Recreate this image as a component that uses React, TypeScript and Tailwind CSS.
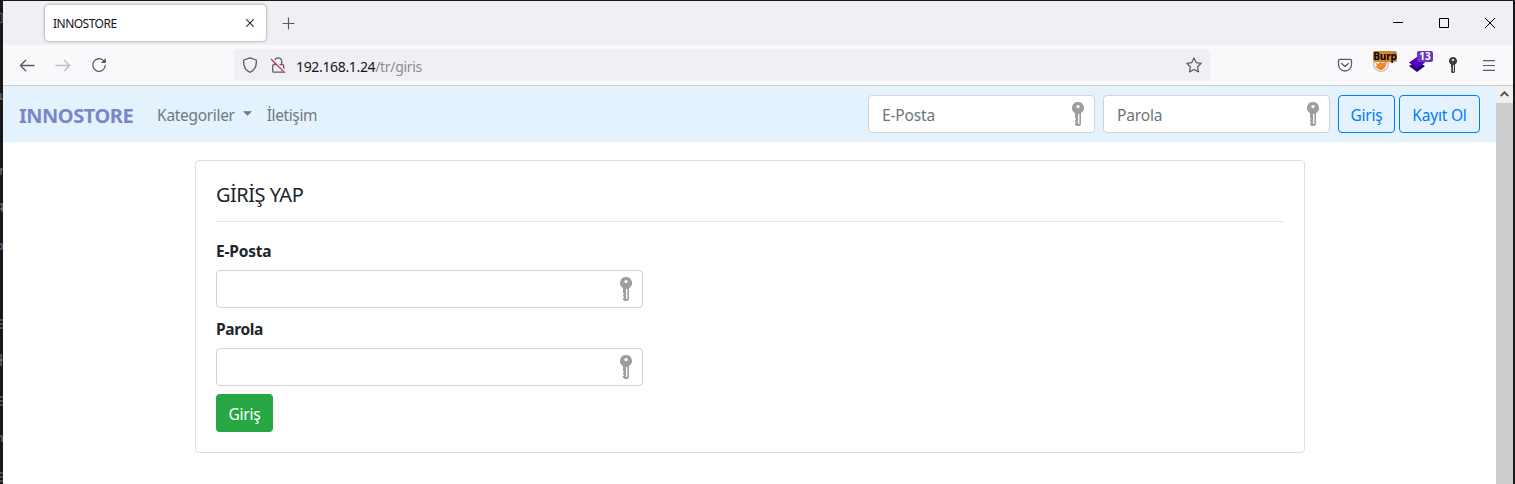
import React from 'react';

function KeyIcon({ className }: { className: string }) {
  return (
    <svg viewBox="0 0 12 24" className={className} fill="currentColor">
      <path
        fillRule="evenodd"
        d="M6 0a6 6 0 0 1 3 11.2V22.500L7.500 24h-3L3 22.500v-1.500h1v-1.300H3v-2.200h1v-1.300H3v-5A6 6 0 0 1 6 0zm0 2.900a1.700 1.700 0 1 0 0 3.400A1.700 1.700 0 0 0 6 2.900zm.1 9.100v10h1.300V12z"
      />
    </svg>
  );
}

function Field({ placeholder, width }: { placeholder?: string; width: string }) {
  return (
    <div className={`${width} flex h-[38px] shrink-0 items-center justify-between rounded border border-[#ced4da] bg-white pl-[13px] pr-[10px]`}>
      <span className="mt-[2px] text-[15.500px] leading-6 tracking-[-0.15px] text-[#6c757d]">{placeholder}</span>
      <KeyIcon className="h-6 w-3 shrink-0 text-[#9e9e9e]" />
    </div>
  );
}

function TabStrip() {
  return (
    <div className="flex h-11 items-start bg-[#f0eff4]">
      <div className="ml-[42px] mt-1 flex h-9 w-[221px] items-center justify-between rounded bg-white pl-2 pr-3 shadow-[0_0_3px_rgba(0,0,0,0.45)]">
        <span className="mt-px text-[12px] tracking-[-0.52px] text-[#15141a]">INNOSTORE</span>
        <svg viewBox="0 0 8 8" className="h-2 w-2" stroke="#2b2a33" strokeWidth="1.100">
          <path d="M.3.3l7.400 7.400M7.700.3L.3 7.700" />
        </svg>
      </div>
      <svg viewBox="0 0 13 13" className="ml-4 mt-4 h-[13px] w-[13px]" stroke="#5b5b66" strokeWidth="1.200">
        <path d="M6.500 .5v12M.5 6.500h12" />
      </svg>
      <div className="ml-auto mr-[18px] mt-[17px] flex gap-9">
        <svg viewBox="0 0 10 10" className="h-[10px] w-[10px]" stroke="#000">
          <path d="M0 4.500h10" />
        </svg>
        <svg viewBox="0 0 10 10" className="h-[10px] w-[10px]" stroke="#000" fill="none">
          <path d="M.5.5h9v9h-9z" />
        </svg>
        <svg viewBox="0 0 10 10" className="h-[10px] w-[10px]" stroke="#000">
          <path d="M0 0l10 10M10 0L0 10" />
        </svg>
      </div>
    </div>
  );
}

function Toolbar() {
  return (
    <div className="flex h-10 items-center bg-[#f9f9fb]">
      <svg viewBox="0 0 16 16" className="ml-4 h-4 w-4" fill="none" stroke="#5b5b66" strokeWidth="1.300" strokeLinecap="round" strokeLinejoin="round">
        <path d="M15 8.500H1.500M6.700 3.200L1.400 8.500l5.300 5.300" />
      </svg>
      <svg viewBox="0 0 16 16" className="ml-5 h-4 w-4" fill="none" stroke="#bdbdc3" strokeWidth="1.300" strokeLinecap="round" strokeLinejoin="round">
        <path d="M1 8.500h13.500M9.300 3.200l5.300 5.300-5.300 5.300" />
      </svg>
      <svg viewBox="0 0 16 16" className="ml-5 h-4 w-4" fill="none" stroke="#5b5b66" strokeWidth="1.300" strokeLinecap="round">
        <path d="M14.300 8.500A6.300 6.300 0 1 1 12.500 3.600" />
        <path d="M14.900 1v5h-5z" fill="#5b5b66" stroke="none" />
      </svg>
      <div className="ml-[127px] flex h-8 w-[976px] items-center rounded bg-[#f0f0f4] pl-2 pr-2">
        <svg viewBox="0 0 16 16" className="h-4 w-4" fill="none" stroke="#5b5b66" strokeWidth="1.300" strokeLinejoin="round">
          <path d="M8 .8l6.300 2.200c.5 5.900-1.500 10.200-6.300 12.300C3.200 13.200 1.200 8.900 1.700 3z" />
        </svg>
        <svg viewBox="0 0 16 16" className="ml-3 h-4 w-4" fill="none">
          <g stroke="#5b5b66" strokeWidth="1.300">
            <rect x="2.700" y="7.600" width="11" height="7.600" rx="1.200" />
            <path d="M4.700 7.500V4.300a3.500 3.500 0 0 1 7 0v3.200" />
          </g>
          <path d="M2 1.700l13.500 13.600" stroke="#f0f0f4" strokeWidth="2.500" />
          <path d="M1 2l14 14" stroke="#e22850" strokeWidth="1.200" />
        </svg>
        <span className="ml-[10px] mt-[2px] text-[14px] tracking-[-0.34px] text-[#15141a]">
          192.168.1.24<span className="text-[#8b8b93]">/tr/giris</span>
        </span>
        <svg viewBox="0 0 16 16" className="ml-auto h-4 w-4" fill="none" stroke="#5b5b66" strokeWidth="1.200" strokeLinejoin="round">
          <path d="M8 1l2.200 4.600 5.100.7-3.700 3.500.9 5.100L8 12.500l-4.500 2.400.9-5.100L.7 6.300l5.100-.7z" />
        </svg>
      </div>
      <svg viewBox="0 0 16 16" className="ml-[127px] h-4 w-4" fill="none" stroke="#5b5b66" strokeWidth="1.300" strokeLinecap="round" strokeLinejoin="round">
        <path d="M3 2.300h10a1.500 1.500 0 0 1 1.500 1.500V7.500a6.500 6.500 0 0 1-13 0V3.800A1.500 1.500 0 0 1 3 2.300z" />
        <path d="M4.600 6.500L8 9.600l3.400-3.100" />
      </svg>
      <div className="relative ml-[19px] h-6 w-[26px]">
        <svg viewBox="0 0 16 16" className="absolute left-px top-[3px] h-4 w-4">
          <circle cx="8" cy="8" r="7.300" fill="#fff" stroke="#bcb3aa" strokeWidth="1.200" />
          <path d="M2 6l3 2 2-2 3 1 4-2-1 5-2 3-4 1-5-3 2-1z" fill="#f28c28" />
          <path d="M4 11l4 1 3-3-2 5z" fill="#e57920" />
        </svg>
        <span className="absolute left-px top-[-2px] h-[11px] w-6 rounded-[2px] bg-[#cc8433] text-center font-['Open_Sans',sans-serif] text-[10px] font-bold leading-[11px] tracking-[-0.2px] text-black">Burp</span>
      </div>
      <div className="relative ml-[11px] h-6 w-6">
        <svg viewBox="0 0 16 16" className="absolute left-0 top-[3px] h-4 w-4">
          <path d="M0 10l8-4.500 8 4.500-8 6z" fill="#23006b" />
          <path d="M0 6.500L8 1l8 5.500-8 6.300z" fill="#4f00bc" />
        </svg>
        <span className="absolute left-2 top-[-2px] h-[11px] w-4 rounded-[2px] bg-[#6b35bd] text-center font-['Open_Sans',sans-serif] text-[10px] font-bold leading-[11px] text-white">13</span>
      </div>
      <KeyIcon className="ml-4 h-4 w-2 text-[#3d3d40]" />
      <svg viewBox="0 0 12 11" className="ml-[26px] h-[11px] w-3" stroke="#5b5b66" strokeWidth="1.200">
        <path d="M0 .7h12M0 5.500h12M0 10.300h12" />
      </svg>
    </div>
  );
}

function Navbar() {
  return (
    <nav className="flex h-14 items-center bg-[#e3f2fd] pl-4 pr-4 text-[15.500px]">
      <span className="mt-[3px] text-[20px] font-bold tracking-[-0.48px] text-[#7986cb]">INNOSTORE</span>
      <span className="ml-6 mt-[3px] tracking-[-0.32px] text-[#717980]">Kategoriler</span>
      <svg viewBox="0 0 10 5" className="mb-px ml-2 h-[5px] w-[9px]" fill="#717980">
        <path d="M0 0h10L5 5z" />
      </svg>
      <span className="ml-[15px] mt-[3px] tracking-[-0.38px] text-[#717980]">İletişim</span>
      <div className="ml-auto flex">
        <Field placeholder="E-Posta" width="w-[227px]" />
        <div className="w-2" />
        <Field placeholder="Parola" width="w-[227px]" />
        <button className="ml-2 h-[38px] w-[57px] rounded border border-[#007bff] pt-[3px] tracking-[-0.2px] text-[#007bff]">Giriş</button>
        <button className="ml-1 h-[38px] w-[81px] rounded border border-[#007bff] pt-[3px] tracking-[-0.2px] text-[#007bff]">Kayıt Ol</button>
      </div>
    </nav>
  );
}

function LoginCard() {
  return (
    <main className="ml-48 mt-[18px] flex h-[293px] w-[1110px] flex-col items-start rounded border border-[#dfdfdf] px-5 text-[#212529]">
      <h1 className="mt-[22px] text-[20px] leading-6 tracking-[-0.5px]">GİRİŞ YAP</h1>
      <div className="mt-[14px] h-px w-full bg-[#e5e5e5]" />
      <label className="mt-[17px] text-[15.500px] font-bold leading-6 tracking-[-0.2px]">E-Posta</label>
      <div className="mt-[7px] flex">
        <Field width="w-[427px]" />
      </div>
      <label className="mt-[9px] text-[15.500px] font-bold leading-6 tracking-[-0.35px]">Parola</label>
      <div className="mt-[7px] flex">
        <Field width="w-[427px]" />
      </div>
      <button className="mt-2 h-[38px] w-[57px] rounded bg-[#28a745] pt-[3px] text-[15.500px] tracking-[-0.2px] text-white">Giriş</button>
    </main>
  );
}

export default function App() {
  return (
    <div className="flex h-[484px] w-[1515px] overflow-hidden bg-[#18181b] pt-px font-['Noto_Sans','Open_Sans',sans-serif]">
      <div className="h-full w-[3px] shrink-0 overflow-hidden">
        <svg viewBox="0 0 3 483" className="h-[483px] w-[3px]" fill="none" stroke="#8d8377">
          <path d="M0 12.500h2v9h-2" stroke="#59648f" />
          <path d="M0 98h3M1 92v6M0 168h3M1 168v6M0 203h3M0 208h3M2 203v8M0 359h3M1 353v12M0 435h2v6" />
          <path d="M0 243h2v5h-2" stroke="#688db5" />
          <path d="M0 319h3M0 323h3M0 327h3M0 396h3M0 400h3M0 404h3M0 472h3M0 476h3M0 480h3" />
        </svg>
      </div>
      <div className="flex w-[1510px] shrink-0 flex-col bg-white">
        <TabStrip />
        <Toolbar />
        <div className="h-px shrink-0 bg-[#cacacf]" />
        <div className="flex flex-1">
          <div className="w-[1493px]">
            <Navbar />
            <LoginCard />
          </div>
          <div className="flex w-[17px] flex-col bg-[#f0f0f0]">
            <div className="flex h-[17px] items-center justify-center">
              <svg viewBox="0 0 9 6" className="mb-px h-[6px] w-[9px]" fill="none" stroke="#505050" strokeWidth="1.900">
                <path d="M.7 5.200l3.800-3.900 3.800 3.900" />
              </svg>
            </div>
            <div className="flex-1 bg-[#cdcdcd]" />
          </div>
        </div>
      </div>
    </div>
  );
}
